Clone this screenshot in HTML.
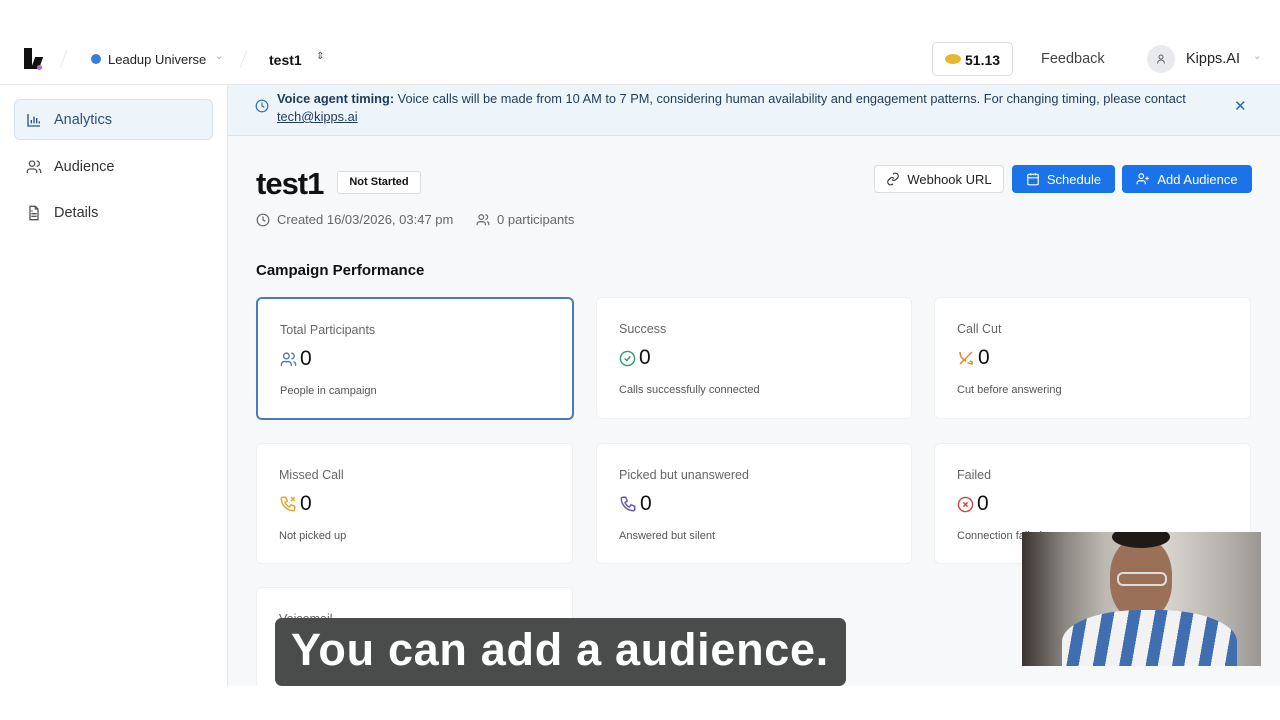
<!DOCTYPE html>
<html><head><meta charset="utf-8"><style>
*{box-sizing:border-box;margin:0;padding:0}
body{width:1280px;height:720px;background:#fff;font-family:"Liberation Sans",sans-serif;position:relative;overflow:hidden;color:#111}
.abs{position:absolute}
.hdr{top:32px;left:0;width:1280px;height:53px;background:#fff;border-bottom:1px solid #e5e7eb}
.side{top:85px;left:0;width:228px;height:601px;background:#fff;border-right:1px solid #e5e7eb}
.main{top:85px;left:228px;width:1052px;height:601px;background:#f6f8fa}
.banner{top:85px;left:228px;width:1052px;height:51px;background:#edf4fa;border-bottom:1px solid #d9e3ec}
.card{background:#fff;border-radius:6px;border:1px solid #eef0f2}
.card .t{position:absolute;left:22px;top:24px;font-size:12.5px;color:#666}
.card .v{position:absolute;left:22px;top:48px;font-size:21px;color:#111;display:flex;align-items:center;gap:3px}
.card .s{position:absolute;left:22px;top:86px;font-size:11px;color:#555}
.btn{height:28px;border-radius:4px;font-size:13px;display:flex;align-items:center;justify-content:center;gap:7px;white-space:nowrap}
.blue{background:#1a73e8;color:#fff}
.nav{left:26px;font-size:14.5px;color:#333;display:flex;align-items:center;gap:12px}
</style></head><body>
<div class="abs hdr"></div>
<div class="abs" style="left:24px;top:48px;width:8px;height:21px;background:#111"></div>
<div class="abs" style="left:33px;top:57px;width:8px;height:12px;background:#111;transform:skewX(-20deg)"></div>
<div class="abs" style="left:37px;top:65px;width:5px;height:5px;border-radius:50%;background:#b06ad8"></div>
<div class="abs" style="left:63px;top:50px;width:1px;height:18px;background:#e5e7eb;transform:rotate(20deg)"></div>
<div class="abs" style="left:91px;top:54px;width:10px;height:10px;border-radius:50%;background:#3b7ddd"></div>
<div class="abs" style="left:108px;top:52px;font-size:13px;color:#222">Leadup Universe</div>
<div class="abs" style="left:215px;top:51px;font-size:10px;color:#aaa">⌄</div>
<div class="abs" style="left:243px;top:50px;width:1px;height:18px;background:#e5e7eb;transform:rotate(20deg)"></div>
<div class="abs" style="left:269px;top:52px;font-size:14px;font-weight:bold;color:#111">test1</div>
<div class="abs" style="left:316px;top:51px;font-size:10px;color:#555">⇕</div>
<div class="abs" style="left:932px;top:42px;width:81px;height:34px;border:1px solid #ddd;border-radius:5px;background:#fff"></div>
<div class="abs" style="left:945px;top:54px;width:16px;height:10px;border-radius:50%;background:#e8b730"></div>
<div class="abs" style="left:965px;top:52px;font-size:14px;font-weight:bold">51.13</div>
<div class="abs" style="left:1041px;top:51px;font-size:14.5px;color:#444">Feedback</div>
<div class="abs" style="left:1147px;top:45px;width:28px;height:28px;border-radius:50%;background:#e8eaed"></div>
<svg class="abs" style="left:1155px;top:53px" width="12" height="12" viewBox="0 0 24 24" fill="none" stroke="#666" stroke-width="2"><circle cx="12" cy="8" r="4"/><path d="M5 21a7 7 0 0114 0"/></svg>
<div class="abs" style="left:1186px;top:51px;font-size:14.5px;color:#222">Kipps.AI</div>
<div class="abs" style="left:1253px;top:51px;font-size:10px;color:#aaa">⌄</div>

<div class="abs side"></div>
<div class="abs" style="left:14px;top:99px;width:199px;height:41px;background:#edf4fa;border:1px solid #d5e3ef;border-radius:6px"></div>
<div class="abs nav" style="top:112px"><svg width="16" height="16" viewBox="0 0 24 24" fill="none" stroke="#2d4f88" stroke-width="2"><path d="M3 3v18h18M8 17v-5M12 17V7M16 17v-8M20 17v-3"/></svg><span style="color:#2d4f88">Analytics</span></div>
<div class="abs nav" style="top:159px"><svg width="16" height="16" viewBox="0 0 24 24" fill="none" stroke="#555" stroke-width="2"><circle cx="9" cy="7" r="4"/><path d="M2 21v-2a4 4 0 014-4h6a4 4 0 014 4v2M16 3a4 4 0 010 8M22 21v-2a4 4 0 00-3-4"/></svg>Audience</div>
<div class="abs nav" style="top:205px"><svg width="16" height="16" viewBox="0 0 24 24" fill="none" stroke="#555" stroke-width="2"><path d="M14 2H6v20h12V6z M14 2v4h4 M8 13h8M8 17h8M8 9h2"/></svg>Details</div>

<div class="abs main"></div>
<div class="abs banner"></div>
<svg class="abs" style="left:255px;top:99px" width="14" height="14" viewBox="0 0 24 24" fill="none" stroke="#2b6cb0" stroke-width="2"><circle cx="12" cy="12" r="10"/><path d="M12 6v6l4 2"/></svg>
<div class="abs" style="left:277px;top:90px;font-size:12.8px;line-height:18px;color:#1f3b5c;width:940px"><b>Voice agent timing:</b> Voice calls will be made from 10 AM to 7 PM, considering human availability and engagement patterns. For changing timing, please contact<br><u>tech@kipps.ai</u></div>
<div class="abs" style="left:1234px;top:97px;font-size:15px;color:#2b6cb0">✕</div>

<div class="abs" style="left:256px;top:166px;font-size:31px;font-weight:bold;letter-spacing:-1px">test1</div>
<div class="abs" style="left:337px;top:171px;width:84px;height:23px;border:1px solid #ddd;border-radius:3px;background:#fff;font-size:11px;font-weight:bold;text-align:center;line-height:21px">Not Started</div>
<svg class="abs" style="left:256px;top:213px" width="14" height="14" viewBox="0 0 24 24" fill="none" stroke="#666" stroke-width="2"><circle cx="12" cy="12" r="10"/><path d="M12 6v6l4 2"/></svg>
<div class="abs" style="left:277px;top:212px;font-size:13px;color:#666">Created 16/03/2026, 03:47 pm</div>
<svg class="abs" style="left:476px;top:213px" width="14" height="14" viewBox="0 0 24 24" fill="none" stroke="#666" stroke-width="2"><circle cx="9" cy="7" r="4"/><path d="M2 21v-2a4 4 0 014-4h6a4 4 0 014 4v2M16 3a4 4 0 010 8M22 21v-2a4 4 0 00-3-4"/></svg>
<div class="abs" style="left:497px;top:212px;font-size:13px;color:#666">0 participants</div>
<div class="abs btn" style="left:874px;top:165px;width:130px;background:#fff;border:1px solid #ddd;color:#222"><svg width="14" height="14" viewBox="0 0 24 24" fill="none" stroke="#333" stroke-width="2"><path d="M10 13a5 5 0 007 0l3-3a5 5 0 00-7-7l-1 1M14 11a5 5 0 00-7 0l-3 3a5 5 0 007 7l1-1"/></svg>Webhook URL</div>
<div class="abs btn blue" style="left:1012px;top:165px;width:103px"><svg width="14" height="14" viewBox="0 0 24 24" fill="none" stroke="#fff" stroke-width="2"><rect x="3" y="4" width="18" height="18" rx="2"/><path d="M16 2v4M8 2v4M3 10h18"/></svg>Schedule</div>
<div class="abs btn blue" style="left:1122px;top:165px;width:130px"><svg width="14" height="14" viewBox="0 0 24 24" fill="none" stroke="#fff" stroke-width="2"><circle cx="9" cy="7" r="4"/><path d="M2 21v-2a4 4 0 014-4h6a4 4 0 014 4v2M19 8v6M16 11h6"/></svg>Add Audience</div>
<div class="abs" style="left:256px;top:262px;font-size:15px;font-weight:bold">Campaign Performance</div>

<div class="abs card" style="left:256px;top:297px;width:318px;height:123px;border:2px solid #4a7bbd"><div class="t">Total Participants</div><div class="v"><svg width="17" height="17" viewBox="0 0 24 24" fill="none" stroke="#4a7bbd" stroke-width="2"><circle cx="9" cy="7" r="4"/><path d="M2 21v-2a4 4 0 014-4h6a4 4 0 014 4v2M16 3a4 4 0 010 8M22 21v-2a4 4 0 00-3-4"/></svg>0</div><div class="s">People in campaign</div></div>
<div class="abs card" style="left:596px;top:297px;width:316px;height:122px"><div class="t">Success</div><div class="v"><svg width="17" height="17" viewBox="0 0 24 24" fill="none" stroke="#2a9d6f" stroke-width="2"><circle cx="12" cy="12" r="10"/><path d="M8 12l3 3 5-6"/></svg>0</div><div class="s">Calls successfully connected</div></div>
<div class="abs card" style="left:934px;top:297px;width:317px;height:122px"><div class="t">Call Cut</div><div class="v"><svg width="18" height="18" viewBox="0 0 24 24" fill="none" stroke="#e08a2c" stroke-width="2"><path d="M4 20L20 4M4 4c0 6 4 10 8 12M14 18c2 1 4 2 6 2v-3l-3-1"/></svg>0</div><div class="s">Cut before answering</div></div>
<div class="abs card" style="left:256px;top:443px;width:317px;height:121px"><div class="t">Missed Call</div><div class="v"><svg width="18" height="18" viewBox="0 0 24 24" fill="none" stroke="#e0a82c" stroke-width="2"><path d="M5 3h4l2 5-3 2a11 11 0 006 6l2-3 5 2v4a2 2 0 01-2 2A17 17 0 013 5a2 2 0 012-2zM16 3l5 5M21 3l-5 5"/></svg>0</div><div class="s">Not picked up</div></div>
<div class="abs card" style="left:596px;top:443px;width:316px;height:121px"><div class="t">Picked but unanswered</div><div class="v"><svg width="18" height="18" viewBox="0 0 24 24" fill="none" stroke="#6a5ab0" stroke-width="2"><path d="M5 3h4l2 5-3 2a11 11 0 006 6l2-3 5 2v4a2 2 0 01-2 2A17 17 0 013 5a2 2 0 012-2z"/></svg>0</div><div class="s">Answered but silent</div></div>
<div class="abs card" style="left:934px;top:443px;width:317px;height:121px"><div class="t">Failed</div><div class="v"><svg width="17" height="17" viewBox="0 0 24 24" fill="none" stroke="#d04444" stroke-width="2"><circle cx="12" cy="12" r="10"/><path d="M9 9l6 6M15 9l-6 6"/></svg>0</div><div class="s">Connection failed</div></div>
<div class="abs card" style="left:256px;top:587px;width:317px;height:110px"><div class="t">Voicemail</div><div class="s" style="top:86px">Calls that went to voicemail</div></div>
<div class="abs" style="left:0;top:686px;width:1280px;height:34px;background:#fff"></div>

<div class="abs" style="left:275px;top:618px;width:571px;height:68px;background:#4a4b4b;border-radius:7px"></div>
<div class="abs" style="left:291px;top:624px;font-size:45px;font-weight:bold;color:#fff;letter-spacing:0.7px">You can add a audience.</div>

<div class="abs" style="left:1022px;top:532px;width:239px;height:134px;background:linear-gradient(90deg,#3a3330 0%,#8a8680 18%,#bdbab4 35%,#d8d5cf 60%,#b5b2ad 85%,#9a9792 100%);overflow:hidden">
<div class="abs" style="left:88px;top:6px;width:62px;height:82px;border-radius:45%;background:#9b7058"></div>
<div class="abs" style="left:90px;top:-6px;width:58px;height:22px;border-radius:50%;background:#1e1a18"></div>
<div class="abs" style="left:95px;top:40px;width:50px;height:14px;border:2px solid #ddd;border-radius:6px"></div>
<div class="abs" style="left:40px;top:78px;width:175px;height:70px;border-radius:45% 45% 0 0;background:repeating-linear-gradient(100deg,#f2f2f2 0 14px,#3f6fb0 14px 26px)"></div>
</div>
</body></html>
